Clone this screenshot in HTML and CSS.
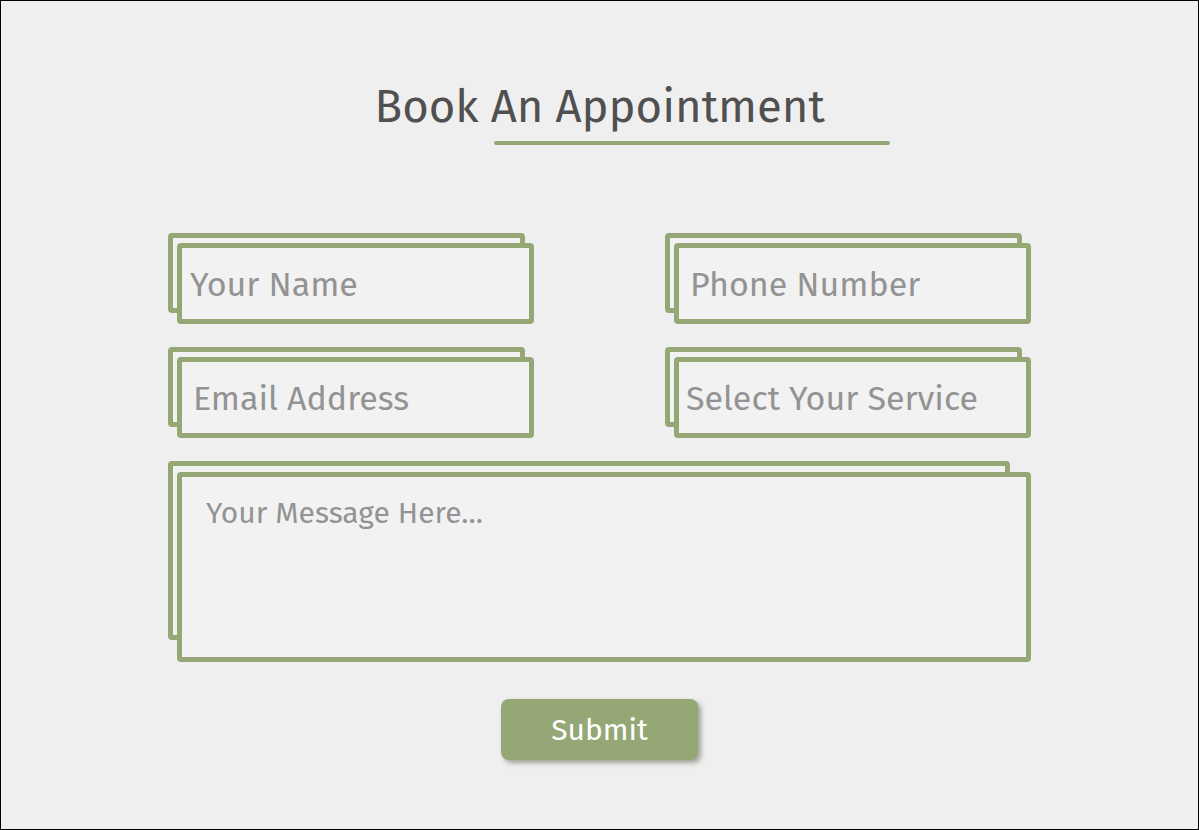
FILE: index.html
```html
<!DOCTYPE html>
<html lang="en">
<head>
<meta charset="utf-8">
<title>Book An Appointment</title>
<link rel="stylesheet" href="styles.css">
</head>
<body>
<div class="page">
  <h1 class="title">Book An Appointment</h1>
  <form class="form">
    <div class="field"><input class="box" type="text" placeholder="Your Name"></div>
    <div class="field"><input class="box box-phone" type="text" placeholder="Phone Number"></div>
    <div class="field"><input class="box box-email" type="email" placeholder="Email Address"></div>
    <div class="field"><select class="box box-select"><option>Select Your Service</option></select></div>
    <div class="field field-wide"><textarea class="box box-message" placeholder="Your Message Here..."></textarea></div>
  </form>
  <div class="actions"><button class="submit" type="button">Submit</button></div>
</div>
</body>
</html>
```
FILE: styles.css
```css
*, *::before, *::after { box-sizing: border-box; }
html, body { margin: 0; padding: 0; }
body {
  font-family: "Fira Sans", "Open Sans", "DejaVu Sans", sans-serif;
  background: #efefef;
}
.page {
  width: 1199px;
  height: 830px;
  border: 1px solid #000;
  background: #efefef;
  padding-top: 76px;
}
.title {
  position: relative;
  width: 450px;
  margin: 0 auto;
  font-size: 45.5px;
  font-weight: 400;
  line-height: 60px;
  color: #505050;
  text-align: center;
  white-space: nowrap;
}
.title::after {
  content: "";
  position: absolute;
  left: 119px;
  top: 64px;
  width: 396px;
  height: 4px;
  border-radius: 2px;
  background: #94a775;
}
.form {
  width: 863px;
  margin: 106px auto 0;
  padding-left: 9px;
  display: grid;
  grid-template-columns: 357px 357px;
  column-gap: 140px;
  row-gap: 33px;
}
.field {
  position: relative;
  height: 81px;
}
.field::before {
  content: "";
  position: absolute;
  left: -9px;
  top: -10px;
  width: 357px;
  height: 80px;
  border: 5px solid #94a775;
  border-radius: 4px;
  background: #f2f2f2;
}
.box {
  position: relative;
  display: block;
  width: 100%;
  height: 100%;
  margin: 0;
  border: 5px solid #94a775;
  border-radius: 4px;
  background: #f2f2f2;
  font-family: inherit;
  font-size: 34px;
  color: #555;
  padding: 2px 0 0 8px;
  outline: none;
}
.box::placeholder { color: #939393; opacity: 1; }
.box-phone, .box-email { padding-left: 11px; }
.box-select {
  appearance: none;
  -webkit-appearance: none;
  color: #939393;
  padding-left: 7px;
}
.field-wide {
  grid-column: 1 / 3;
  height: 190px;
  margin-top: 1px;
}
.field-wide::before {
  top: -11px;
  width: 842px;
  height: 179px;
}
.box-message {
  resize: none;
  font-size: 30px;
  padding: 16px 24px;
  line-height: 40px;
}
.actions {
  display: flex;
  justify-content: center;
  margin-top: 37px;
}
.submit {
  width: 197px;
  height: 61px;
  border: none;
  border-radius: 8px;
  background: #94a775;
  color: #ffffff;
  font-family: inherit;
  font-size: 30px;
  box-shadow: 3px 3px 5px rgba(60, 70, 40, 0.45);
  padding: 0;
  cursor: pointer;
}
```
